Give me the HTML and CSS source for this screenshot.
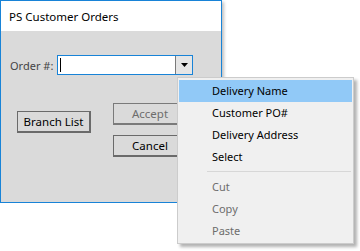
FILE: index.html
```html
<!DOCTYPE html>
<html>
  <head>
    <title>PS Customer Orders</title>
    <link rel="stylesheet" href="styles.css">
  </head>
  <body>
    <div class="window">
      <div class="titlebar">PS Customer Orders</div>
      <div class="client">
        <div class="order-row">
          <label class="order-label" for="orderNo">Order #:</label>
          <div class="combo">
            <div class="combo-edit"><span class="caret"></span></div>
            <div class="combo-button">
              <svg width="7" height="4" viewBox="0 0 7 4"><path d="M0 0H7L3.5 4Z" fill="#000"/></svg>
            </div>
          </div>
        </div>
        <div class="button-row">
          <button class="btn btn-branch">Branch List</button>
          <div class="btn-stack">
            <button class="btn" disabled>Accept</button>
            <button class="btn">Cancel</button>
          </div>
        </div>
      </div>
    </div>

    <!-- context menu over the combo box -->
    <div class="menu">
      <div class="menu-item active">Delivery Name</div>
      <div class="menu-item">Customer PO#</div>
      <div class="menu-item">Delivery Address</div>
      <div class="menu-item">Select</div>
      <div class="menu-sep"></div>
      <div class="menu-item disabled">Cut</div>
      <div class="menu-item disabled">Copy</div>
      <div class="menu-item disabled">Paste</div>
    </div>
  </body>
</html>
```

FILE: styles.css
```css
body,
html {
  margin: 0;
  background: #fff;
  font-family: "Noto Sans", "Liberation Sans", sans-serif;
  font-size: 11px;
}
.window {
  width: 220px;
  height: 201px;
  border: 1px solid #1883d7;
  background: #dadada;
  box-shadow: 2px 2px 3px rgba(0, 0, 0, 0.25);
  display: flex;
  flex-direction: column;
}
.titlebar {
  height: 30px;
  background: #fff;
  color: #000;
  padding-left: 8px;
  line-height: 32px;
  font-size: 11.5px;
}
.client {
  padding: 24px 0 0 9px;
}
.order-row {
  display: flex;
  align-items: center;
}
.order-label {
  color: #444;
  width: 47px;
  flex-shrink: 0;
  white-space: nowrap;
}
.combo {
  display: flex;
  width: 134px;
  height: 18px;
  border: 1px solid #1883d7;
  background: #fff;
}
.combo-edit {
  flex-grow: 1;
  padding: 2px 0 0 2px;
}
.caret {
  display: block;
  width: 1px;
  height: 14px;
  background: #000;
}
.combo-button {
  width: 16px;
  border-left: 1px solid #7a7a7a;
  background: #e5e5e5;
  display: flex;
  align-items: center;
  justify-content: center;
}
.button-row {
  display: flex;
  align-items: flex-start;
  margin-top: 28px;
}
.btn {
  font-family: inherit;
  font-size: 11.5px;
  color: #000;
  background: #dadada;
  border: 1px solid #6a6a6a;
  border-right-width: 2px;
  border-bottom-width: 2px;
  padding: 0;
  height: 22px;
  width: 75px;
}
.btn:disabled {
  color: #6d6d6d;
  border-color: #7a7a7a;
}
.btn-branch {
  width: 74px;
  margin: 8px 0 0 7px;
}
.btn-stack {
  display: flex;
  flex-direction: column;
  gap: 10px;
  margin-left: 22px;
}
.menu {
  position: absolute;
  left: 177px;
  top: 77px;
  width: 173px;
  padding: 2px 1px 1px 1px;
  background: #f0f0f0;
  border: 1px solid #cccccc;
  box-shadow: 3px 3px 3px rgba(0, 0, 0, 0.3);
}
.menu-item {
  height: 22px;
  line-height: 22px;
  padding-left: 33px;
  color: #000;
}
.menu-item.active {
  background: #91c9f7;
}
.menu-item.disabled {
  color: #6d6d6d;
}
.menu-sep {
  height: 1px;
  background: #d7d7d7;
  margin: 3px 1px 4px 28px;
}
```
